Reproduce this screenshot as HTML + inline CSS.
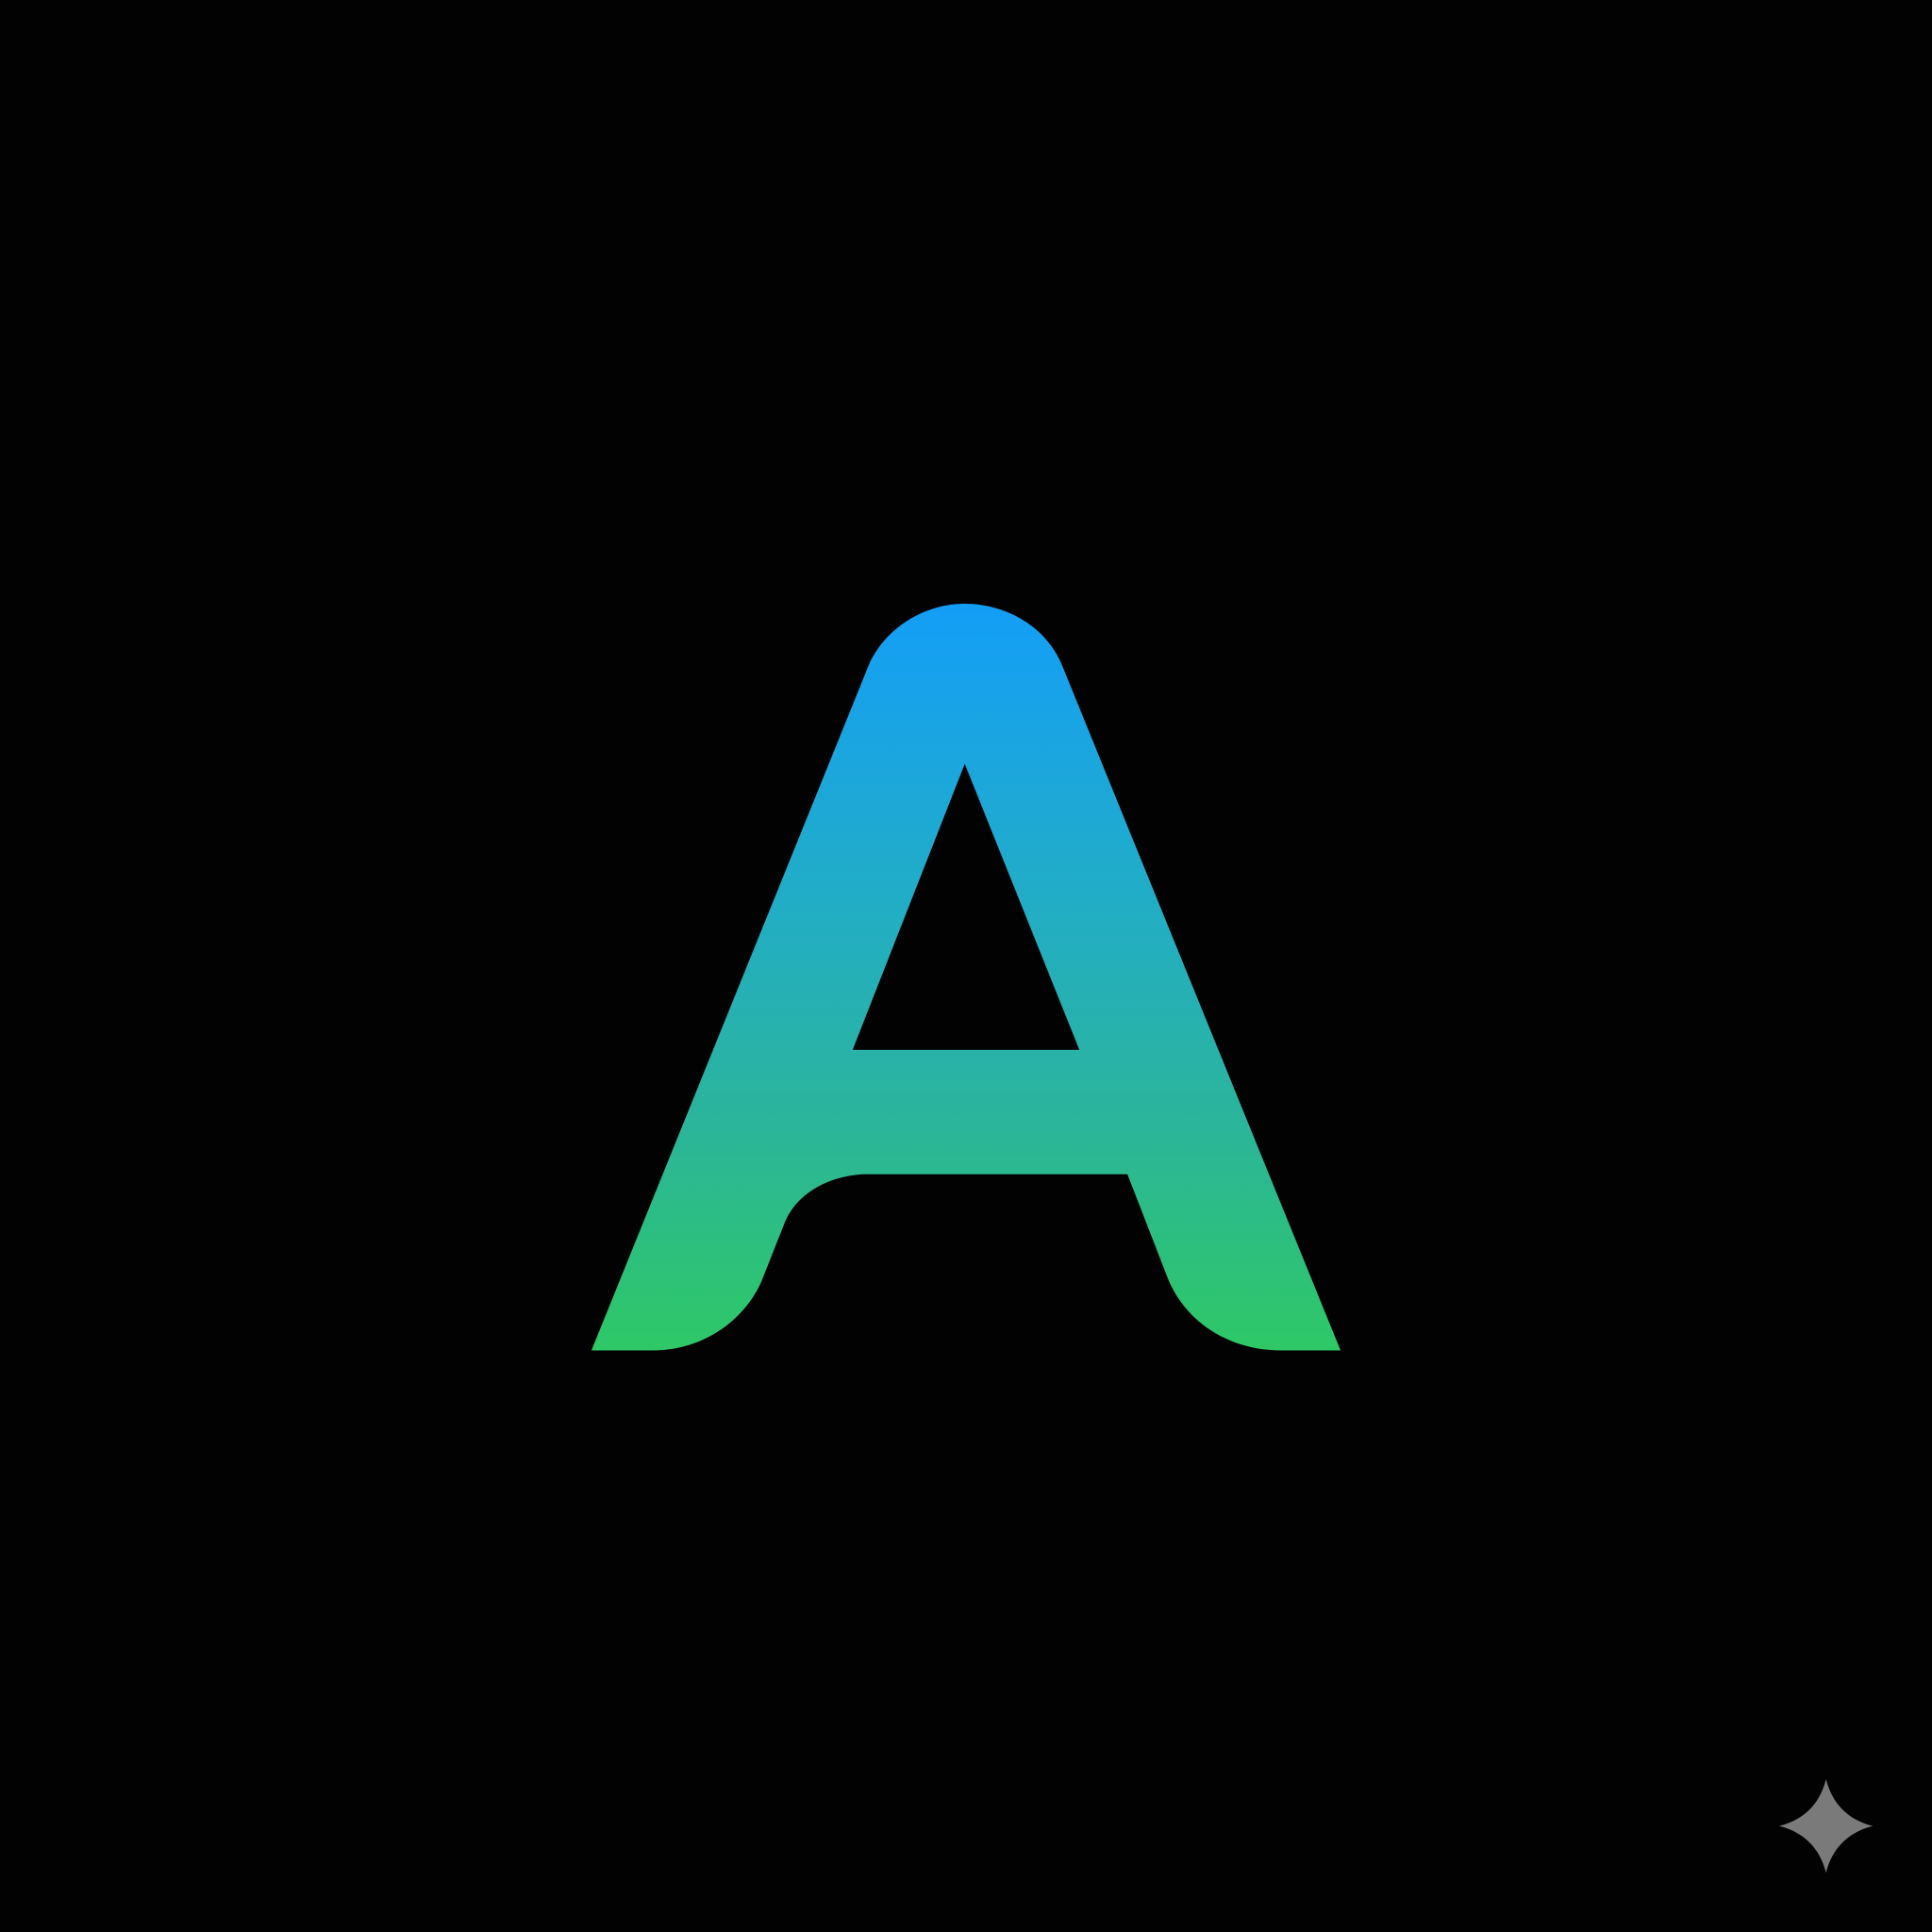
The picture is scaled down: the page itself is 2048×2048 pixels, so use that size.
<!DOCTYPE html>
<html>
<head>
<meta charset="utf-8">
<style>
html,body{margin:0;padding:0;background:#020202;width:2048px;height:2048px;overflow:hidden}
svg{display:block}
</style>
</head>
<body>
<svg width="2048" height="2048" viewBox="0 0 1568 1568" xmlns="http://www.w3.org/2000/svg">
<defs>
<linearGradient id="g" x1="0" y1="490" x2="0" y2="1096" gradientUnits="userSpaceOnUse">
<stop offset="0" stop-color="#139ef7"/>
<stop offset="0.4" stop-color="#22adc6"/>
<stop offset="0.7" stop-color="#2bb59a"/>
<stop offset="1" stop-color="#2ec866"/>
</linearGradient>
</defs>
<rect width="1568" height="1568" fill="#020202"/>
<path fill="url(#g)" fill-rule="evenodd" d="
M705 540
C718 510 750 490 783 490
C818 490 850 510 862 540
L1088 1096
L1040 1096
C996 1096 962 1072 948 1038
L915 953
L700 953
C670 955 646 970 637 992
L618 1040
C604 1072 570 1096 530 1096
L480 1096
Z
M783 620 L692 852 L876 852 Z"/>
<path fill="#7a7a7a" d="M1482 1444 C1487 1464 1500 1477 1520 1482 C1500 1487 1487 1500 1482 1520 C1477 1500 1464 1487 1444 1482 C1464 1477 1477 1464 1482 1444 Z"/>
</svg>
</body>
</html>
